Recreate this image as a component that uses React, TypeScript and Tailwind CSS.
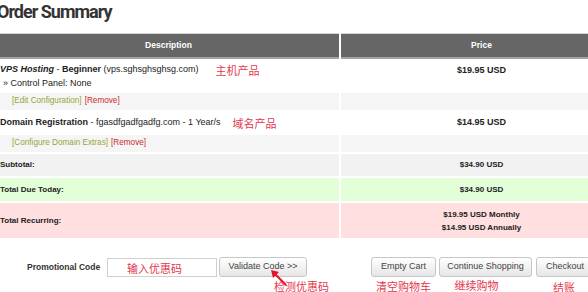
import React from 'react';

const cjk = "font-['Noto_Sans_CJK_SC',sans-serif]";

const Btn: React.FC<{ label: string; width: string; className?: string }> = ({ label, width, className = '' }) => (
  <div
    className={`${width} h-[20px] border border-[#c6c6c6] rounded-[3px] bg-linear-to-b from-white to-[#e6e6e6] text-[9px] text-[#444] flex items-center justify-center whitespace-nowrap ${className}`}
  >
    {label}
  </div>
);

const Note: React.FC<{ children: React.ReactNode; className?: string }> = ({ children, className = '' }) => (
  <span className={`${cjk} text-[11px] leading-[14px] text-[#e2384e] whitespace-nowrap ${className}`}>{children}</span>
);

export default function App() {
  return (
    <div className="w-[588px] h-[292px] overflow-hidden bg-white text-[#333] font-['Liberation_Sans',Arial,sans-serif]">
      <div className="w-[624px] ml-[-2px]">
        <h1 className="h-[33px] pt-[1px] ml-[-1px] text-[18px] leading-[22px] font-bold tracking-[-1px] text-[#333] font-['Roboto',sans-serif]">
          Order Summary
        </h1>

        <div className="grid grid-cols-[341px_281px] gap-x-[2px] gap-y-[2px]">
          {/* header */}
          <div className="h-[26px] bg-[#666] border-t border-[#d6d6d6] border-b-2 border-b-[#a3a3a3] flex items-center justify-center text-white font-bold text-[8.5px]">
            Description
          </div>
          <div className="h-[26px] bg-[#666] border-t border-[#d6d6d6] border-b-2 border-b-[#a3a3a3] flex items-center justify-center text-white font-bold text-[8.5px]">
            Price
          </div>

          {/* vps */}
          <div className="h-[30px] pl-[2px] flex flex-col justify-center text-[9px] leading-[12px] text-[#222]">
            <div className="whitespace-nowrap">
              <i className="font-bold">VPS Hosting</i> - <b>Beginner</b> (vps.sghsghsghsg.com)
              <Note className="ml-[17px] align-middle">主机产品</Note>
            </div>
            <div className="pl-[3px]">» Control Panel: None</div>
          </div>
          <div className="h-[30px] pt-[3px] text-center font-bold text-[9px] leading-[12px] text-[#222]">$19.95 USD</div>

          <div className="h-[17px] bg-[#f5f5f5] pl-[14px] flex items-center text-[8.2px] whitespace-nowrap">
            <span className="text-[#97a43a]">[Edit Configuration]</span>
            <span className="ml-[3px] text-[#cc2a2a]">[Remove]</span>
          </div>
          <div className="h-[17px] bg-[#f5f5f5]" />

          {/* domain */}
          <div className="h-[21px] pl-[2px] flex items-center text-[9px] text-[#222] whitespace-nowrap">
            <b>Domain Registration</b>&nbsp;- fgasdfgadfgadfg.com - 1 Year/s
            <Note className="ml-[12px]">域名产品</Note>
          </div>
          <div className="h-[21px] flex items-center justify-center font-bold text-[9px] text-[#222]">$14.95 USD</div>

          <div className="h-[17px] bg-[#f5f5f5] pl-[14px] flex items-center text-[8.2px] whitespace-nowrap">
            <span className="text-[#97a43a]">[Configure Domain Extras]</span>
            <span className="ml-[3px] text-[#cc2a2a]">[Remove]</span>
          </div>
          <div className="h-[17px] bg-[#f5f5f5]" />

          {/* totals */}
          <div className="h-[22px] bg-[#f2f2f2] pl-[2px] flex items-center font-bold text-[8px] text-[#222]">Subtotal:</div>
          <div className="h-[22px] bg-[#f2f2f2] flex items-center justify-center font-bold text-[8px] text-[#222]">$34.90 USD</div>

          <div className="h-[23px] bg-[#e2ffd8] pl-[2px] flex items-center font-bold text-[8px] text-[#222]">Total Due Today:</div>
          <div className="h-[23px] bg-[#e2ffd8] flex items-center justify-center font-bold text-[8px] text-[#222]">$34.90 USD</div>

          <div className="h-[35px] bg-[#ffdfdf] pl-[2px] flex items-center font-bold text-[8px] text-[#222]">Total Recurring:</div>
          <div className="h-[35px] bg-[#ffdfdf] flex flex-col items-center justify-center font-bold text-[8px] leading-[13px] text-[#222]">
            <span>$19.95 USD Monthly</span>
            <span>$14.95 USD Annually</span>
          </div>
        </div>

        {/* promo + actions */}
        <div className="flex items-start mt-[19px] pl-[29px]">
          <div className="w-[80px] shrink-0 h-[20px] flex items-center font-bold text-[8.5px] text-[#333] whitespace-nowrap">Promotional Code</div>
          <div className="w-[110px] shrink-0 h-[19px] mt-[1px] border border-[#cfcfcf] bg-white flex items-center pl-[19px]">
            <Note>输入优惠码</Note>
          </div>
          <div className="relative w-[88px] shrink-0 ml-[2px]">
            <Btn label="Validate Code >>" width="w-[88px]" />
            <Note className="block mt-[2px] ml-[55px]">检测优惠码</Note>
            <svg className="absolute left-[50px] top-[11px]" width="20" height="20" viewBox="0 0 20 20">
              <line x1="17" y1="17" x2="6" y2="6" stroke="#e5112b" strokeWidth="2" />
              <polygon points="2,2 10,4 4,10" fill="#e5112b" />
            </svg>
          </div>
          <div className="w-[65px] shrink-0 ml-[64px] flex flex-col items-center">
            <Btn label="Empty Cart" width="w-[65px]" />
            <Note className="mt-[2px]">清空购物车</Note>
          </div>
          <div className="w-[93px] shrink-0 ml-[3px] flex flex-col items-center">
            <Btn label="Continue Shopping" width="w-[93px]" />
            <Note className="mt-[1px] mr-[18px]">继续购物</Note>
          </div>
          <div className="w-[58px] shrink-0 ml-[4px] flex flex-col items-center">
            <Btn label="Checkout" width="w-[58px]" />
            <Note className="mt-[3px] mr-[2px]">结账</Note>
          </div>
        </div>
      </div>
    </div>
  );
}
